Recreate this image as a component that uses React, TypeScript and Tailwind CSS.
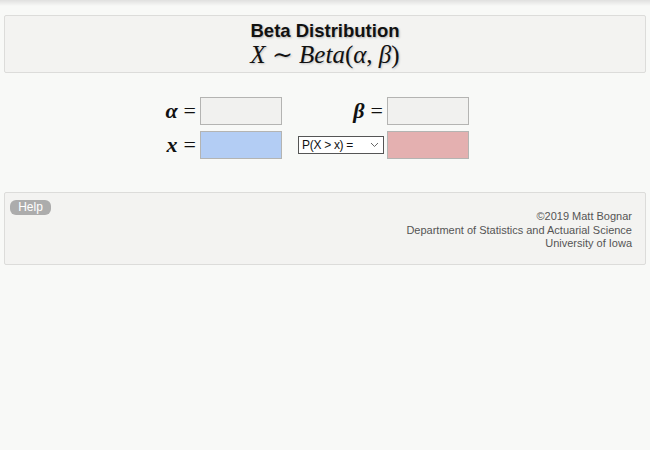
const serif = "font-['Liberation_Serif','DejaVu_Serif',serif]";

function MathLabel({ sym }: { sym: string }) {
  return (
    <span className={`${serif} text-[22px] leading-none text-[#111] flex items-center justify-end pr-[4px]`}>
      <i className="font-bold">{sym}</i>
      <span className="ml-[6px]">=</span>
    </span>
  );
}

export default function App() {
  return (
    <div className="min-h-[450px] w-[650px] bg-[#f8f9f7] font-['Liberation_Sans',Arial,sans-serif]">
      <div className="h-[6px] bg-gradient-to-b from-[#e0e0df] to-transparent" />

      <div className="mx-[4px] mt-[9px] h-[58px] rounded-[2px] border border-[#dcdcda] bg-[#f3f3f1] flex flex-col items-center pt-[4px]">
        <div className="text-[18.5px] font-bold leading-[21px] text-[#111] [text-shadow:1px_1px_2px_#b5b5b5]">
          Beta Distribution
        </div>
        <div className={`${serif} text-[25px] leading-[27px] text-[#111] [text-shadow:1px_1px_2px_#c0c0c0]`}>
          <i>X</i> ∼ <i>Beta</i>(<i>α</i>, <i>β</i>)
        </div>
      </div>

      <div className="ml-[156px] mt-[24px] grid grid-cols-[44px_82px_16px_89px_82px] gap-y-[6px]">
        <MathLabel sym="α" />
        <div className="h-[28px] border border-[#b4b4b2] bg-[#f1f1ef]" />
        <div />
        <MathLabel sym="β" />
        <div className="h-[28px] border border-[#b4b4b2] bg-[#f1f1ef]" />

        <MathLabel sym="x" />
        <div className="h-[28px] border border-[#b4b4b2] bg-[#b3cdf4]" />
        <div />
        <div className="flex items-center">
          <div className="flex h-[18px] w-[86px] items-center justify-between border border-[#555] bg-white pl-[3px] pr-[4px] text-[12px] tracking-[-0.3px] text-[#111]">
            <span>P(X &gt; x) =</span>
            <svg width="9" height="6" viewBox="0 0 9 6" fill="none">
              <path d="M1 1l3.5 3.5L8 1" stroke="#666" strokeWidth="1" />
            </svg>
          </div>
        </div>
        <div className="h-[28px] border border-[#b4b4b2] bg-[#e4b0b0]" />
      </div>

      <div className="mx-[4px] mt-[33px] h-[73px] rounded-[2px] border border-[#dcdcda] bg-[#f3f3f1] px-[5px] pt-[7px]">
        <div className="flex">
          <button className="h-[15px] w-[41px] rounded-[6px] bg-[#acacac] text-[12px] leading-[15px] text-white">
            Help
          </button>
        </div>
        <div className="-mt-[5px] pr-[8px] text-right text-[11px] leading-[13.5px] text-[#555]">
          <div>©2019 Matt Bognar</div>
          <div>Department of Statistics and Actuarial Science</div>
          <div>University of Iowa</div>
        </div>
      </div>
    </div>
  );
}
